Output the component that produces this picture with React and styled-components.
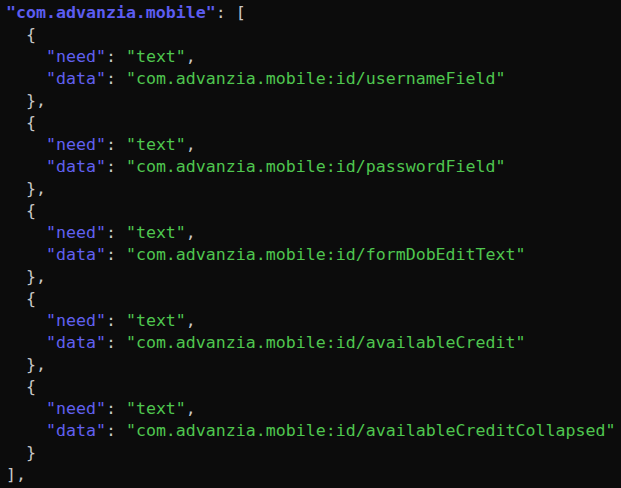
import React from 'react';
import styled, { createGlobalStyle } from 'styled-components';

const Global = createGlobalStyle`
  html, body {
    margin: 0;
    padding: 0;
    background: #0c0c0c;
  }
`;

const Code = styled.pre`
  margin: 0;
  padding: 2px 0 0 6px;
  width: 621px;
  height: 488px;
  box-sizing: border-box;
  overflow: hidden;
  background: #0c0c0c;
  color: #c8c8c8;
  font-family: "DejaVu Sans Mono", "Liberation Mono", monospace;
  font-size: 16.6px;
  line-height: 22px;
  white-space: pre;
`;

const Key = styled.span`
  color: ${p => (p.$root ? '#5c5cf0' : '#6060f0')};
  font-weight: ${p => (p.$root ? 700 : 400)};
`;

const Str = styled.span`
  color: #4fc64f;
`;

const fields = [
  'usernameField',
  'passwordField',
  'formDobEditText',
  'availableCredit',
  'availableCreditCollapsed',
];

const App = () => (
  <>
    <Global />
    <Code>
      <Key $root>"com.advanzia.mobile"</Key>: [{'\n'}
      {fields.map((f, i) => (
        <React.Fragment key={f}>
          {'  {\n'}
          {'    '}<Key>"need"</Key>: <Str>"text"</Str>,{'\n'}
          {'    '}<Key>"data"</Key>: <Str>"com.advanzia.mobile:id/{f}"</Str>{'\n'}
          {i < fields.length - 1 ? '  },\n' : '  }\n'}
        </React.Fragment>
      ))}
      ],
    </Code>
  </>
);

export default App;
